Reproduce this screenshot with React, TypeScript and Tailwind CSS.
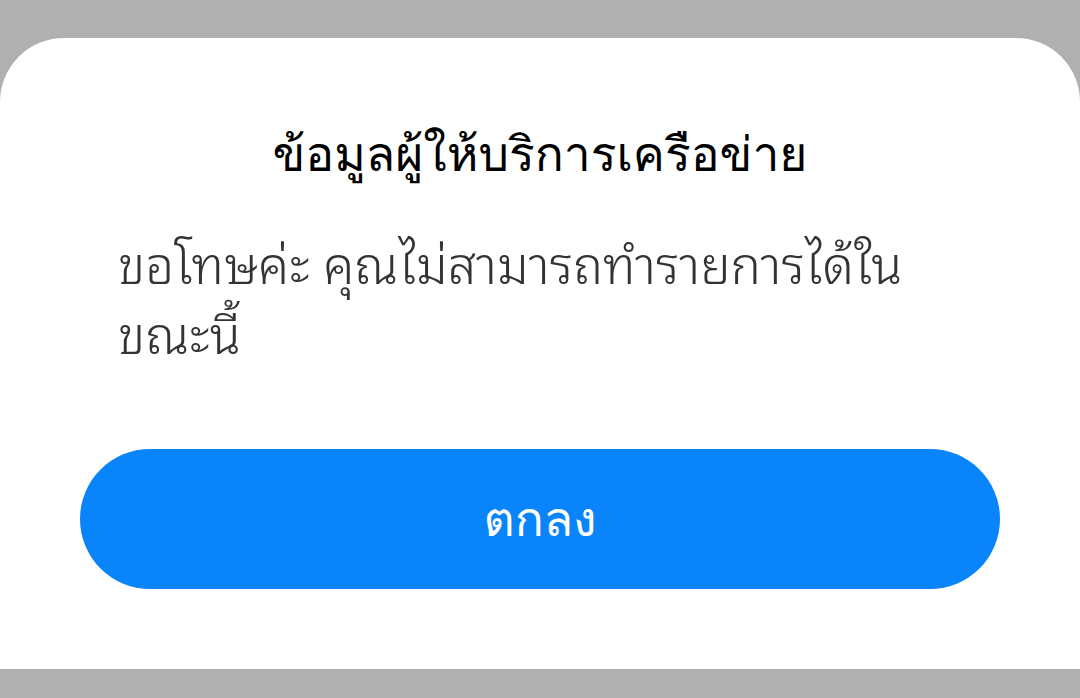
export default function App() {
  return (
    <div className="flex h-[698px] w-[1080px] flex-col overflow-hidden bg-[#b0b0b0] pt-[38px] pb-[29px]">
      <div className="flex flex-1 flex-col rounded-t-[64px] bg-white">
        <h1 className="pt-[86px] text-center font-['Loma','Noto_Sans',sans-serif] text-[48px] font-normal leading-[60px] text-black">
          ข้อมูลผู้ให้บริการเครือข่าย
        </h1>
        <p className="mt-[42px] px-[118px] font-['Noto_Sans_Thai_Looped','Noto_Sans',sans-serif] text-[51px] font-[350] leading-[70px] text-[#333333]">
          ขอโทษค่ะ คุณไม่สามารถทำรายการได้ในขณะนี้
        </p>
        <div className="mt-auto px-[80px] pb-[80px]">
          <button
            type="button"
            className="flex h-[140px] w-full items-center justify-center rounded-full bg-[#0a84fa] font-['Loma','Noto_Sans',sans-serif] text-[48px] text-white"
          >
            ตกลง
          </button>
        </div>
      </div>
    </div>
  );
}
